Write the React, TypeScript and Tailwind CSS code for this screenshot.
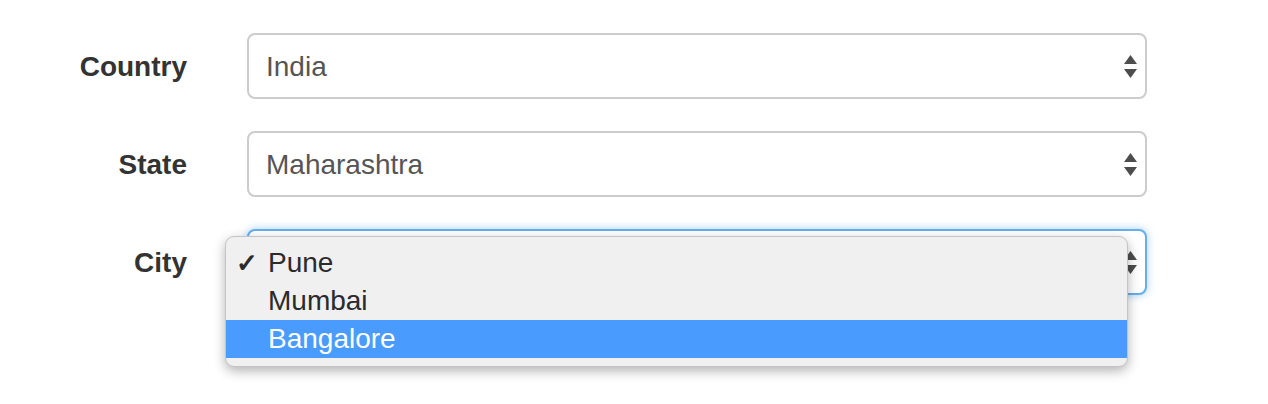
import React from "react";

function Arrows() {
  return (
    <svg width="13" height="23" viewBox="0 0 13 23" className="shrink-0" aria-hidden>
      <path d="M6.5 0 L13 9 L0 9 Z" fill="#4d4d4d" />
      <path d="M0 14 L13 14 L6.5 23 Z" fill="#4d4d4d" />
    </svg>
  );
}

function SelectBox({ value, focused = false, children }: { value: string; focused?: boolean; children?: React.ReactNode }) {
  return (
    <div
      className={[
        "relative flex h-[66px] w-[900px] items-center justify-between rounded-[8px] border-2 bg-white pl-[17px] pr-[8px]",
        focused
          ? "border-[#66afe9] shadow-[0_0_8px_rgba(102,175,233,0.6)]"
          : "border-[#ccc]",
      ].join(" ")}
    >
      <span className="pt-[2px] text-[28px] text-[#555]">{value}</span>
      <Arrows />
      {children}
    </div>
  );
}

const cities = ["Pune", "Mumbai", "Bangalore"];

export default function App() {
  const selected = "Pune";
  const hovered = "Bangalore";
  return (
    <div
      className="h-[404px] w-[1268px] bg-white pt-[33px]"
      style={{ fontFamily: '"Liberation Sans", Arial, sans-serif' }}
    >
      <div className="flex flex-col gap-[32px]">
        {[
          { label: "Country", value: "India" },
          { label: "State", value: "Maharashtra" },
        ].map((row) => (
          <div key={row.label} className="flex items-center">
            <label className="w-[187px] pt-[2px] text-right text-[28px] font-bold text-[#333]">{row.label}</label>
            <div className="ml-[60px]">
              <SelectBox value={row.value} />
            </div>
          </div>
        ))}
        <div className="flex items-center">
          <label className="w-[187px] pt-[2px] text-right text-[28px] font-bold text-[#333]">City</label>
          <div className="ml-[60px]">
            <SelectBox value="Pune" focused>
              {/* native popup menu */}
              <ul className="absolute left-[-24px] top-[5px] z-10 w-[903px] rounded-[9px] border border-[#c4c4c4] bg-[#f0f0f0] pt-[7px] pb-[8px] shadow-[0_4px_12px_rgba(0,0,0,0.3)]">
                {cities.map((c) => (
                  <li
                    key={c}
                    className={[
                      "relative flex h-[38px] items-center pl-[42px] text-[28px]",
                      c === hovered ? "bg-[#4a9bfe] text-white" : "text-[#2b2b2b]",
                    ].join(" ")}
                  >
                    {c === selected && (
                      <span className="absolute left-[10px] text-[26px] font-bold">✓</span>
                    )}
                    {c}
                  </li>
                ))}
              </ul>
            </SelectBox>
          </div>
        </div>
      </div>
    </div>
  );
}
